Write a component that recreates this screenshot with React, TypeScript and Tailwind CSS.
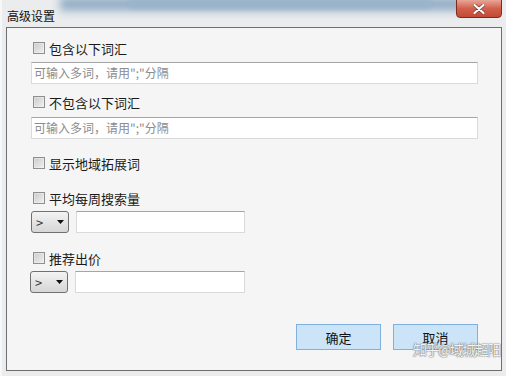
import React from "react";

const font = { fontFamily: '"Noto Sans CJK SC", "Noto Sans", sans-serif' };

function Check({ label }: { label: string }) {
  return (
    <div className="flex items-center h-[20px] pl-[26px]">
      <div className="w-[12px] h-[12px] border border-[#8e8f8f] bg-gradient-to-br from-[#dcdcdc] to-[#f4f4f4] flex items-center justify-center">
        <div className="w-[8px] h-[8px] bg-gradient-to-br from-[#cfcfcf] to-[#ececec]" />
      </div>
      <span className="ml-[4px] text-[13px] text-[#1a1a1a] leading-none">{label}</span>
    </div>
  );
}

function TextInput({ placeholder, w }: { placeholder?: string; w: string }) {
  return (
    <div
      className={`${w} h-[22px] bg-white border border-[#dadada] border-t-[#a5a5a5] flex items-center pl-[2px] text-[12px] text-[#8c8c8c] leading-none`}
    >
      {placeholder}
    </div>
  );
}

function Select() {
  return (
    <div className="w-[38px] h-[22px] rounded-[3px] border border-[#707070] bg-gradient-to-b from-[#f3f3f3] to-[#d6d6d6] flex items-center justify-between px-[4px]">
      <span className="text-[13px] text-[#333] leading-none">&gt;</span>
      <svg width="7" height="4" viewBox="0 0 7 4">
        <polygon points="0,0 7,0 3.5,4" fill="#111" />
      </svg>
    </div>
  );
}

function Btn({ label }: { label: string }) {
  return (
    <div className="w-[85px] h-[26px] bg-[#cbe4f8] border border-[#7fb0de] flex items-center justify-center text-[13px] text-[#111] leading-none">
      {label}
    </div>
  );
}

export default function App() {
  return (
    <div className="relative w-[506px] h-[376px] overflow-hidden bg-[#eaecee]" style={font}>
      {/* blurred background band */}
      <div className="absolute left-[60px] top-[-3px] w-[430px] h-[14px] bg-[#94afc6] blur-[4px]" />
      <div className="absolute left-[130px] top-[-1px] w-[300px] h-[9px] bg-[#9ab4ca] blur-[2px]" />
      <div className="absolute left-0 top-0 w-[2px] h-[376px] bg-[#f6f7f8]" />
      {/* title bar */}
      <div className="relative h-[27px] flex items-center pl-[7px] pt-[4px]">
        <span className="text-[12px] text-[#111] leading-none">高级设置</span>
      </div>
      {/* close button */}
      <div className="absolute left-[456px] top-[-1px] w-[46px] h-[19px] rounded-b-[4px] border border-[#7d2b22] bg-gradient-to-b from-[#e7a597] via-[#d2604c] to-[#c24a36] flex items-center justify-center">
        <svg width="12" height="10" viewBox="0 0 12 10">
          <path d="M1.5 1 L10.5 9 M10.5 1 L1.5 9" stroke="#7a3a30" strokeWidth="3.4" strokeLinecap="round" />
          <path d="M1.5 1 L10.5 9 M10.5 1 L1.5 9" stroke="#ffffff" strokeWidth="2.2" strokeLinecap="round" />
        </svg>
      </div>
      {/* panel */}
      <div className="ml-[6px] w-[496px] h-[344px] border border-[#6e6e6e] bg-[#f5f5f5] flex flex-col pt-[10px]">
        <Check label="包含以下词汇" />
        <div className="pl-[24px] mt-[4px]">
          <TextInput w="w-[447px]" placeholder={'可输入多词，请用";"分隔'} />
        </div>
        <div className="mt-[8px]">
          <Check label="不包含以下词汇" />
        </div>
        <div className="pl-[24px] mt-[5px]">
          <TextInput w="w-[447px]" placeholder={'可输入多词，请用";"分隔'} />
        </div>
        <div className="mt-[14px]">
          <Check label="显示地域拓展词" />
        </div>
        <div className="mt-[15px]">
          <Check label="平均每周搜索量" />
        </div>
        <div className="pl-[24px] mt-[3px] flex items-center gap-[7px]">
          <Select />
          <TextInput w="w-[169px]" />
        </div>
        <div className="mt-[15px]">
          <Check label="推荐出价" />
        </div>
        <div className="pl-[23px] mt-[3px] flex items-center gap-[7px]">
          <Select />
          <TextInput w="w-[170px]" />
        </div>
        <div className="mt-[31px] flex justify-end gap-[12px] pr-[23px]">
          <Btn label="确定" />
          <Btn label="取消" />
        </div>
      </div>
      {/* watermark */}
      <div
        className="absolute left-[413px] top-[342px] whitespace-nowrap text-[14px] leading-none text-white/90 tracking-[-1.5px]"
        style={{ textShadow: "0 0 1px #777, 0 0 1px #777, 0 0 2px #999" }}
      >
        知乎@域城超阳
      </div>
    </div>
  );
}
